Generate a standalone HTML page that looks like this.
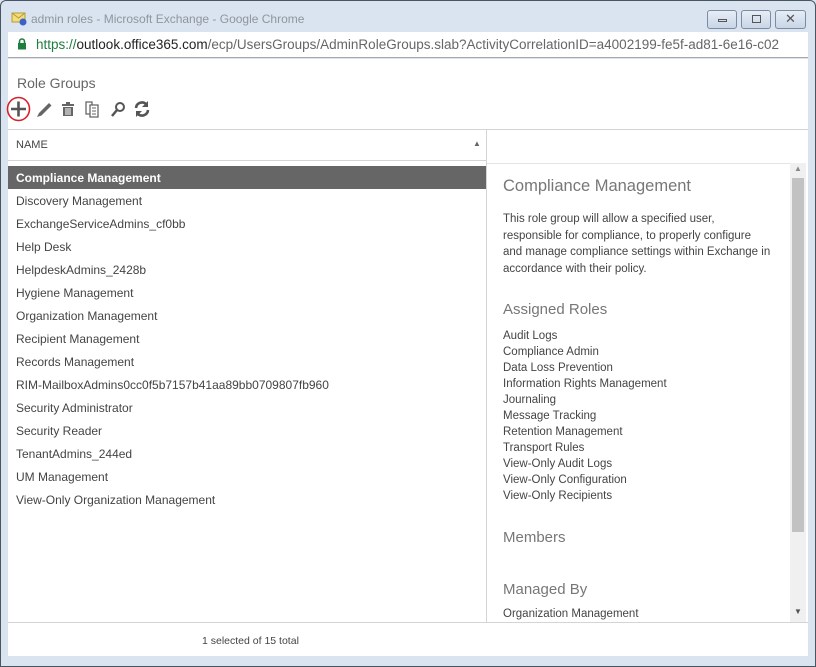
<!DOCTYPE html>
<html><head><style>
*{margin:0;padding:0;box-sizing:border-box}
body{width:816px;height:667px;overflow:hidden;background:#dbe5f1;font-family:"Liberation Sans",sans-serif;position:relative}
.frame{position:absolute;left:0;top:0;width:816px;height:667px;border:1px solid #4a5562;border-radius:6px 6px 0 0;background:#dae4f0}
.abs{position:absolute}
.title{left:31px;top:12px;font-size:12px;color:#8e969e}
.addr{left:8px;top:32px;width:800px;height:26px;background:#fff;border-bottom:1px solid #a8a8a8}
.url{left:36px;top:37px;font-size:13.5px;color:#666;white-space:nowrap;width:770px;overflow:hidden}
.url b{font-weight:normal;color:#222}
.content{left:8px;top:59px;width:800px;height:597px;background:#fff}
.btn{top:10px;width:30px;height:19px;border:1px solid #7d8ba0;border-radius:3px;background:linear-gradient(#e6edf7,#c9d6e6)}
.list div{position:absolute;left:16px;font-size:12px;color:#444;white-space:nowrap}
.rp{left:503px;font-size:11.5px;color:#444;white-space:nowrap}
.h{left:503px;font-size:15px;color:#777;white-space:nowrap}
</style></head><body>
<div class="frame"></div>
<svg class="abs" style="left:11px;top:11px" width="17" height="16"><rect x="1" y="2" width="13" height="9" fill="#f3dc7a" stroke="#b59a3a"/><path d="M1 2 L7.5 7 L14 2" fill="none" stroke="#b59a3a"/><circle cx="12" cy="11" r="3.5" fill="#3a62c8"/></svg>
<div class="abs title">admin roles - Microsoft Exchange - Google Chrome</div>
<div class="abs btn" style="left:707px"><div class="abs" style="left:10px;top:8px;width:9px;height:3px;border:1px solid #555"></div></div>
<div class="abs btn" style="left:741px"><div class="abs" style="left:10px;top:4px;width:9px;height:8px;border:1px solid #555"></div></div>
<div class="abs btn" style="left:775px;width:31px"><div class="abs" style="left:9px;top:0px;font-size:13px;color:#555">✕</div></div>
<div class="abs addr"></div>
<svg class="abs" style="left:17px;top:38px" width="10" height="12"><path d="M2.5 5 V3.5 a2.5 2.5 0 0 1 5 0 V5" fill="none" stroke="#1e7e3e" stroke-width="1.6"/><rect x="1" y="5" width="8" height="6.5" fill="#1e7e3e"/></svg>
<div class="abs url"><span style="color:#1e7e3e">https://</span><b>outlook.office365.com</b>/ecp/UsersGroups/AdminRoleGroups.slab?ActivityCorrelationID=a4002199-fe5f-ad81-6e16-c02</div>
<div class="abs content"></div>
<div class="abs" style="left:17px;top:75px;font-size:14px;color:#666">Role Groups</div>
<svg class="abs" style="left:4px;top:95px" width="150" height="30">
<ellipse cx="14.5" cy="14" rx="11" ry="11.5" fill="none" stroke="#d9202a" stroke-width="1.6"/>
<path d="M14.5 6.5 V21.5 M7 14 H22" stroke="#555" stroke-width="2.6"/>
<path d="M33 22 L35 18 L45 8 L47.5 10.5 L37.5 20.5 Z" fill="#666"/>
<rect x="58" y="9" width="12" height="2" fill="#666"/><rect x="62" y="7" width="4" height="2" fill="#666"/>
<rect x="59" y="12" width="10" height="9" fill="#666"/><path d="M62 13 V20 M64 13 V20 M66 13 V20" stroke="#fff"/>
<path d="M82 7 H88 V19 H82 Z" fill="#fff" stroke="#666" stroke-width="1.3"/><path d="M86 10 H94 V22 H86 Z" fill="#fff" stroke="#666" stroke-width="1.3"/><path d="M88 13 H92 M88 16 H92 M88 19 H92" stroke="#666"/>
<circle cx="116" cy="12" r="4" fill="none" stroke="#555" stroke-width="2"/><path d="M113 15 L108 21" stroke="#555" stroke-width="2.5"/>
<path d="M132 13 a6 6 0 0 1 10.5-3.5" fill="none" stroke="#555" stroke-width="2.6"/><path d="M144 6 V12 H138 Z" fill="#555"/>
<path d="M144 15 a6 6 0 0 1 -10.5 3.5" fill="none" stroke="#555" stroke-width="2.6"/><path d="M132 22 V16 H138 Z" fill="#555"/>
</svg>
<div class="abs" style="left:8px;top:129px;width:800px;border-top:1px solid #d4d4d4"></div>
<div class="abs" style="left:8px;top:160px;width:478px;border-top:1px solid #d4d4d4"></div>
<div class="abs" style="left:486px;top:163px;width:320px;border-top:1px solid #e4e4e4"></div>
<div class="abs" style="left:486px;top:130px;height:493px;border-left:1px solid #d4d4d4"></div>
<div class="abs" style="left:16px;top:139px;font-size:11px;color:#444">NAME</div>
<div class="abs" style="left:473px;top:139px;font-size:8px;color:#666">▲</div>
<div class="abs" style="left:8px;top:166px;width:478px;height:23px;background:#666"></div>
<div class="list">
<div style="top:171px;color:#fff;font-weight:bold">Compliance Management</div>
<div style="top:194px">Discovery Management</div>
<div style="top:217px">ExchangeServiceAdmins_cf0bb</div>
<div style="top:240px">Help Desk</div>
<div style="top:263px">HelpdeskAdmins_2428b</div>
<div style="top:286px">Hygiene Management</div>
<div style="top:309px">Organization Management</div>
<div style="top:332px">Recipient Management</div>
<div style="top:355px">Records Management</div>
<div style="top:378px">RIM-MailboxAdmins0cc0f5b7157b41aa89bb0709807fb960</div>
<div style="top:401px">Security Administrator</div>
<div style="top:424px">Security Reader</div>
<div style="top:447px">TenantAdmins_244ed</div>
<div style="top:470px">UM Management</div>
<div style="top:493px">View-Only Organization Management</div>
</div>
<div class="abs h" style="top:177px;font-size:16.5px">Compliance Management</div>
<div class="abs rp" style="top:211px;line-height:16.5px">This role group will allow a specified user,<br>responsible for compliance, to properly configure<br>and manage compliance settings within Exchange in<br>accordance with their policy.</div>
<div class="abs h" style="top:301px">Assigned Roles</div>
<div class="abs rp" style="top:328px;line-height:16px">Audit Logs<br>Compliance Admin<br>Data Loss Prevention<br>Information Rights Management<br>Journaling<br>Message Tracking<br>Retention Management<br>Transport Rules<br>View-Only Audit Logs<br>View-Only Configuration<br>View-Only Recipients</div>
<div class="abs h" style="top:529px">Members</div>
<div class="abs h" style="top:581px">Managed By</div>
<div class="abs rp" style="top:608px">Organization Management</div>
<div class="abs" style="left:790px;top:163px;width:16px;height:459px;background:#f0f0f0"></div>
<div class="abs" style="left:792px;top:178px;width:12px;height:354px;background:#c2c2c2"></div>
<div class="abs" style="left:794px;top:164px;font-size:8px;color:#888">▲</div>
<div class="abs" style="left:794px;top:607px;font-size:8px;color:#555">▼</div>
<div class="abs" style="left:8px;top:622px;width:800px;border-top:1px solid #d4d4d4"></div>
<div class="abs" style="left:202px;top:635px;font-size:10.5px;color:#444">1 selected of 15 total</div>
</body></html>
